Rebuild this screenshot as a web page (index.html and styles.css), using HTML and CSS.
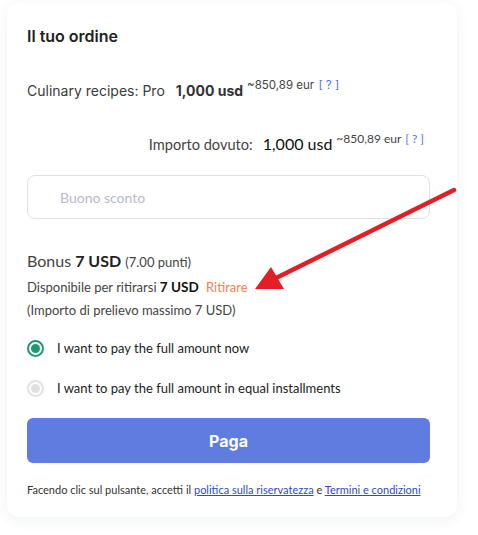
FILE: index.html
```html
<!DOCTYPE html>
<html lang="it">
<head>
<meta charset="utf-8">
<link rel="stylesheet" href="styles.css">
</head>
<body>
<div class="card">
  <h2 class="title">Il tuo ordine</h2>
  <div class="product">
    <span class="prod-name">Culinary recipes: Pro</span>
    <span class="prod-price">1,000 usd</span>
    <span class="approx">~850,89 eur <a class="help">[ ? ]</a></span>
  </div>
  <div class="due">
    <span class="due-label">Importo dovuto:</span>
    <span class="due-price">1,000 usd</span>
    <span class="approx">~850,89 eur <a class="help">[ ? ]</a></span>
  </div>
  <div class="coupon"><span class="placeholder">Buono sconto</span></div>
  <div class="bonus">
    <div class="bonus-line">Bonus <b>7 USD</b> <span class="small">(7.00 punti)</span></div>
    <div class="avail">Disponibile per ritirarsi <b>7 USD</b> <a class="withdraw">Ritirare</a></div>
    <div class="avail">(Importo di prelievo massimo 7 USD)</div>
  </div>
  <div class="options">
    <label class="option"><span class="radio checked"></span>I want to pay the full amount now</label>
    <label class="option"><span class="radio"></span>I want to pay the full amount in equal installments</label>
  </div>
  <button class="pay">Paga</button>
  <p class="terms">Facendo clic sul pulsante, accetti il <a>politica sulla riservatezza</a> e <a>Termini e condizioni</a></p>
</div>
<svg class="arrow" width="478" height="535" viewBox="0 0 478 535">
  <line x1="454" y1="190" x2="272" y2="280" stroke="#e31e24" stroke-width="4.5" stroke-linecap="round"/>
  <polygon points="255,289 271,267 284,289" fill="#e31e24"/>
</svg>
</body>
</html>
```
FILE: styles.css
```css
html, body { margin: 0; padding: 0; background: #fff; }
body { width: 478px; height: 535px; position: relative; overflow: hidden; font-family: Lato, "Liberation Sans", sans-serif; color: #333; }
.card {
  position: relative;
  margin: 3px 0 0 7px;
  width: 450px;
  height: 514px;
  box-sizing: border-box;
  padding: 24px 27px 0 20px;
  background: #fff;
  border-radius: 12px;
  box-shadow: 0 3px 14px rgba(30, 50, 80, 0.07);
}
.title { margin: 0; font-family: Inter, sans-serif; font-weight: 600; font-size: 16px; line-height: 18px; color: #222; }
.product { margin-top: 35px; font-family: Inter, sans-serif; font-size: 14px; color: #3a3a3a; display: flex; align-items: baseline; line-height: 22px; }
.prod-price { font-weight: 700; margin-left: 11px; color: #333; }
.approx { font-size: 12px; position: relative; top: -7px; margin-left: 4px; color: #444; }
.product .approx { font-size: 11.5px; }
.help { color: #5a6ef0; margin-left: 1px; }
.due { margin-top: 30px; display: flex; justify-content: flex-end; align-items: baseline; font-size: 14.6px; line-height: 22px; padding-right: 6px; color: #444; }
.due-price { font-size: 16px; margin-left: 10px; color: #111; }
.coupon {
  margin-top: 18px;
  height: 44px;
  border: 1px solid #e0dfea;
  border-radius: 8px;
  box-sizing: border-box;
  display: flex; align-items: center;
  padding-left: 32px;
}
.placeholder { color: #b7b9cf; font-size: 14px; }
.bonus { margin-top: 31px; }
.bonus-line { font-size: 16px; line-height: 21px; margin-bottom: 3px; color: #444; }
.bonus-line b { color: #222; }
.small { font-size: 13px; }
.avail { font-size: 13px; line-height: 23px; color: #444; }
.avail b { color: #111; font-size: 13.5px; }
.withdraw { color: #f5814f; margin-left: 4px; font-size: 13px; }
.options { margin-top: 16px; display: flex; flex-direction: column; gap: 20px; }
.option { display: flex; align-items: center; font-size: 13px; line-height: 20px; color: #222; }
.radio {
  width: 17px; height: 17px; border-radius: 50%; box-sizing: border-box;
  border: 2px solid #e2e2e2; background: #fff; margin-right: 13px; position: relative; flex: none;
}
.radio::after { content: ""; position: absolute; left: 2px; top: 2px; width: 9px; height: 9px; border-radius: 50%; background: #e0e0e0; }
.radio.checked { border-color: #1f9a6e; }
.radio.checked::after { background: #1f9a6e; }
.pay {
  display: block; width: 100%; margin-top: 20px; height: 45px;
  border: none; border-radius: 6px; background: #5f7de0; color: #fff;
  font-family: Inter, sans-serif; font-weight: 700; font-size: 16px;
}
.terms { margin: 19px 0 0; font-size: 11px; line-height: 16px; color: #333; }
.terms a { color: #3048cc; text-decoration: underline; }
.arrow { position: absolute; left: 0; top: 0; pointer-events: none; }
```
